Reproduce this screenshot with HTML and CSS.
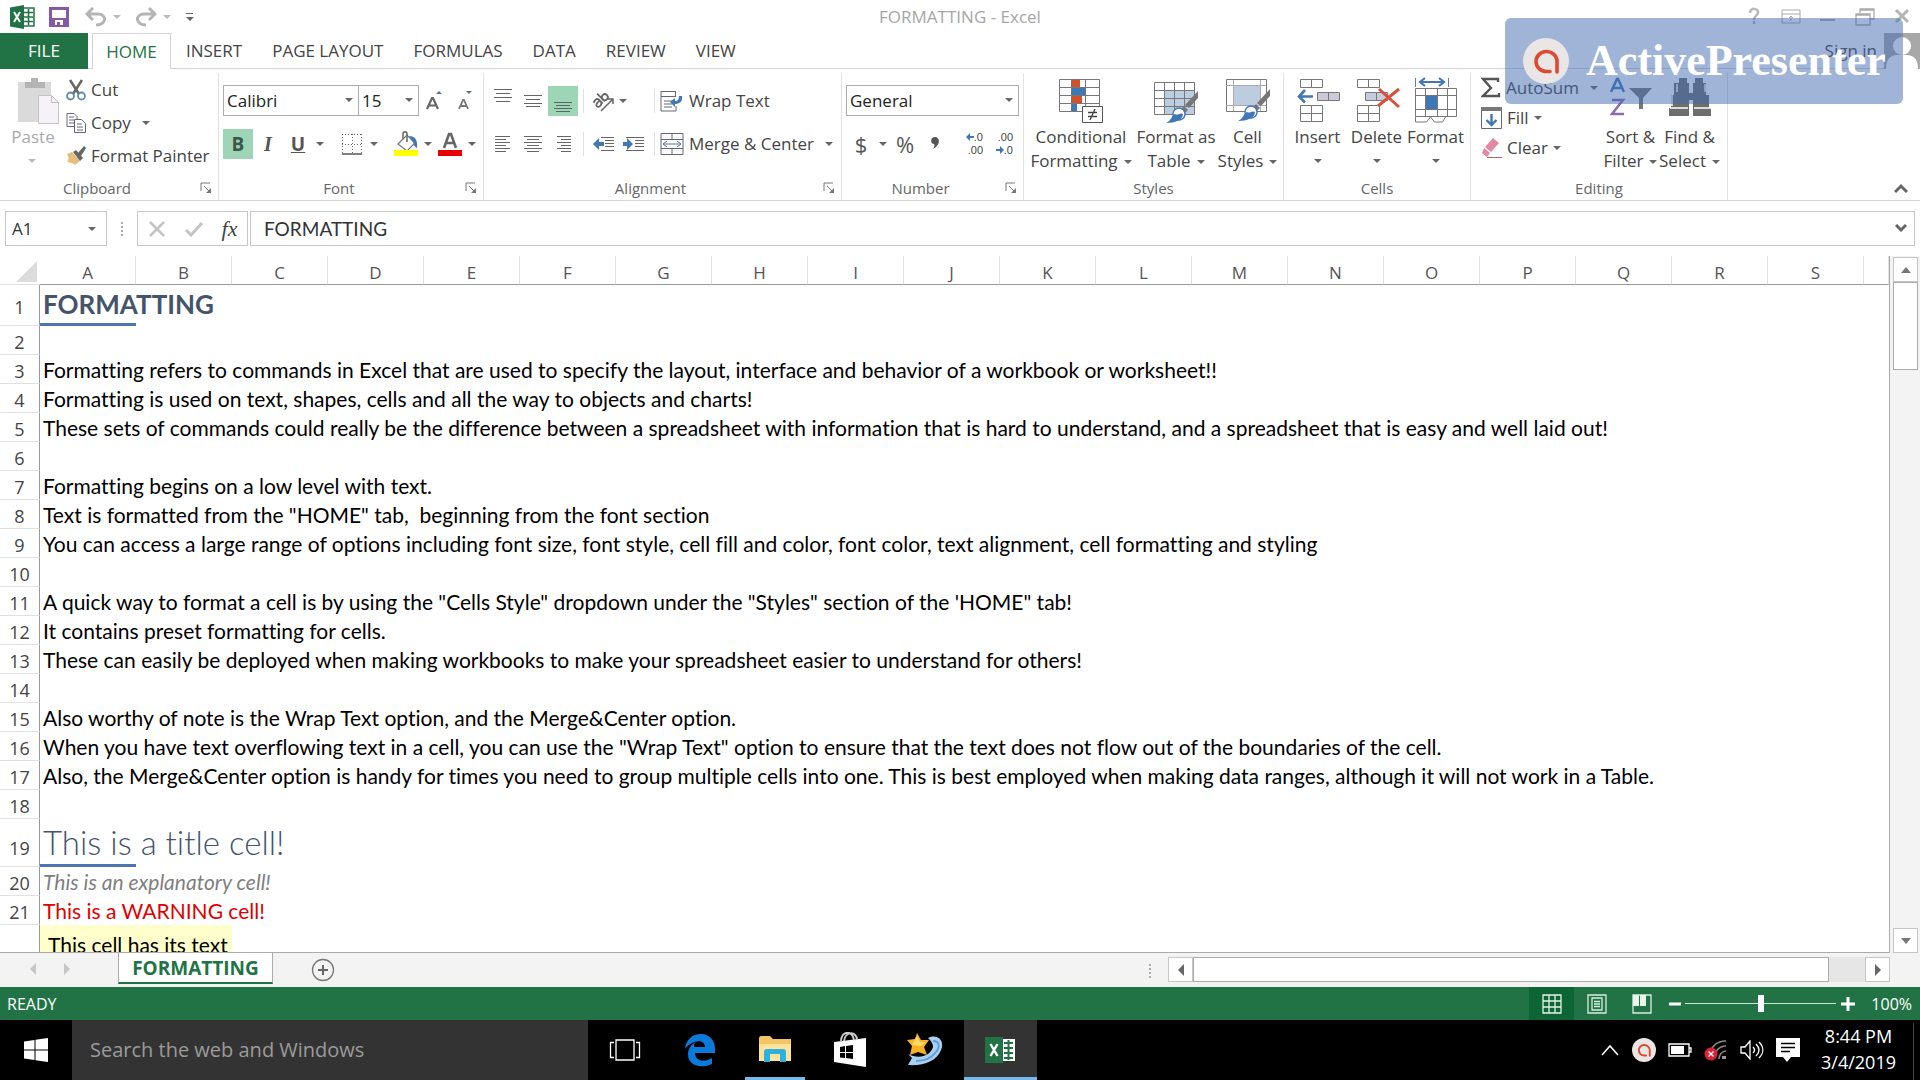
FILE: index.html
```html
<!DOCTYPE html>
<html lang="en">
<head>
<meta charset="utf-8">
<title>FORMATTING - Excel</title>
<link rel="stylesheet" href="styles.css">
</head>
<body>
<svg class="defs" aria-hidden="true">
  <symbol id="launcher" viewBox="0 0 12 12"><path d="M1 9V1h9" fill="none" stroke="#777"/><path d="M4 4l5 5" stroke="#777"/><path d="M11 6v5H6z" fill="#777"/></symbol>
  <symbol id="excel" viewBox="0 0 26 26"><path d="M14 4h11v18H14z" fill="#fff" stroke="#217346" stroke-width="1.5"/><path d="M15 8.5h9M15 13h9M15 17.5h9M19.5 5v16" stroke="#217346" stroke-width="1.6"/><path d="M1 3.5L15 1v24L1 22.500z" fill="#217346"/><path d="M5 8l6 10M11 8L5 18" stroke="#fff" stroke-width="2"/></symbol>
  <symbol id="brush" viewBox="0 0 34 34"><path d="M33 1v7l-9 10-4-3z" fill="#777"/><path d="M19 16l4 4-3 3-4-4z" fill="#777"/><circle cx="14" cy="24" r="6" fill="#fff" stroke="#3f78b5" stroke-width="1.4"/><path d="M1 33c5-2 6-8 9-9 3 2 5-2 8 0 0 6-8 9-17 9z" fill="#3f78b5"/></symbol>
  <symbol id="presenter" viewBox="0 0 46 46"><circle cx="23" cy="23" r="23" fill="#ebe6e6"/><path d="M34 34V23a10.500 10 0 1 0-10.500 10.500h3.500" fill="none" stroke="#dc4a36" stroke-width="3.600" stroke-linecap="round"/></symbol>
</svg>

<header class="titlebar">
  <div class="quick">
    <svg width="26" height="26"><use href="#excel"/></svg>
    <button class="flat save" aria-label="Save"><svg width="20" height="20" viewBox="0 0 20 20"><path d="M1.500 1.500h17v17h-17z" fill="#fff" stroke="#8659a6" stroke-width="3"/><path d="M2 11h16v8H2z" fill="#8659a6"/><path d="M6 13h8v5H6z" fill="#fff"/><path d="M8 15h3v4H8z" fill="#8659a6"/></svg></button>
    <button class="flat undo" aria-label="Undo"><svg width="22" height="20" viewBox="0 0 22 20"><path d="M2 7h11c9 0 9 11-2 11M8 1L2 7l6 6" fill="none" stroke="#b4b4b4" stroke-width="3"/></svg><i class="caret pale"></i></button>
    <button class="flat undo" aria-label="Redo"><svg width="22" height="20" viewBox="0 0 22 20"><path d="M20 7H9c-9 0-9 11 2 11M14 1l6 6-6 6" fill="none" stroke="#b4b4b4" stroke-width="3"/></svg><i class="caret pale"></i></button>
    <button class="flat custom" aria-label="Customize"><span></span><i class="caret"></i></button>
  </div>
  <h1 class="title">FORMATTING - Excel</h1>
  <div class="window">
    <button class="flat" aria-label="Help"><svg width="20" height="20" viewBox="0 0 20 20"><path d="M6 6c0-6 9-5 8 0-1 3-4 3-4 7M10 14v3" stroke="#b8b8b8" stroke-width="2.500" fill="none"/></svg></button>
    <button class="flat" aria-label="Ribbon options"><svg width="20" height="20" viewBox="0 0 20 20"><path d="M1 3h18v13H1zM1 7h18M10 14V9M8 11l2-2 2 2" stroke="#aaa" fill="none"/></svg></button>
    <button class="flat" aria-label="Minimize"><svg width="20" height="20" viewBox="0 0 20 20"><path d="M2 13h15" stroke="#aaa" stroke-width="2"/></svg></button>
    <button class="flat" aria-label="Restore"><svg width="20" height="20" viewBox="0 0 20 20"><path d="M5 6V2h14v10h-4M5 3h14M1 7h14v11H1zM1 8h14" stroke="#aaa" stroke-width="1.300" fill="none"/></svg></button>
    <button class="flat" aria-label="Close"><svg width="20" height="20" viewBox="0 0 20 20"><path d="M4 3l12 12M16 3L4 15" stroke="#b4b4b4" stroke-width="3"/></svg></button>
  </div>
</header>

<nav class="tabs">
  <button class="tab file">FILE</button>
  <button class="tab home">HOME</button>
  <button class="tab">INSERT</button>
  <button class="tab">PAGE LAYOUT</button>
  <button class="tab">FORMULAS</button>
  <button class="tab">DATA</button>
  <button class="tab">REVIEW</button>
  <button class="tab">VIEW</button>
  <a class="signin" href="#">Sign in</a>
  <svg class="avatar" width="36" height="36" viewBox="0 0 36 36"><path d="M0 0h36v36H0z" fill="#a8a8a8"/><circle cx="18" cy="13" r="9" fill="#fff"/><path d="M2 36c0-10 4-13 10-14h12c6 1 10 4 10 14z" fill="#fff"/></svg>
</nav>

<section class="ribbon" aria-label="Home ribbon">
  <div class="group clipboard">
    <div class="body">
      <button class="big paste"><svg width="42" height="48" viewBox="0 0 42 48"><path d="M0 5h33v40H0z" fill="#dadada"/><path d="M7 11V5h6V1h7v4h7v6z" fill="#b4b4b4"/><path d="M20.500 18.500h13l7 7v21h-20z" fill="#f6f3f8" stroke="#c3c3c3"/><path d="M33.500 18.500v7h7" fill="none" stroke="#c3c3c3"/></svg><span>Paste</span><i class="caret pale"></i></button>
      <div class="stack wide">
        <button class="item"><svg width="20" height="22" viewBox="0 0 20 22"><path d="M4 1l9 14M16 1L7 15" stroke="#666" stroke-width="2.500"/><circle cx="4.500" cy="17" r="3.500" fill="none" stroke="#6288ad" stroke-width="1.800"/><circle cx="15.500" cy="17" r="3.500" fill="none" stroke="#6288ad" stroke-width="1.800"/></svg>Cut</button>
        <button class="item"><svg width="20" height="22" viewBox="0 0 20 22"><path d="M1 1.500h7l3 3v10H1zM3 5h5M3 8h5M3 11h5" fill="#fff" stroke="#667"/><path d="M8.500 7.500h7l4 4v9h-11zM11 12h5M11 15h6M11 18h6" fill="#fff" stroke="#667"/></svg>Copy<i class="caret"></i></button>
        <button class="item"><svg width="20" height="22" viewBox="0 0 20 22"><path d="M1 9l5-2 8 9-5 4c-3-3-6-2-8-3 2-2 2-5 0-8z" fill="#e7bd7b"/><path d="M7 7l3-2 7 8-3 3zM12 8l6-7 2 2-5 8z" fill="#666"/></svg>Format Painter</button>
      </div>
    </div>
    <div class="caption"><span>Clipboard</span><button class="flat" aria-label="Clipboard settings"><svg width="12" height="12"><use href="#launcher"/></svg></button></div>
  </div>

  <div class="group font">
    <div class="body rows">
      <div class="row">
        <label class="combo face"><select aria-label="Font"><option>Calibri</option></select></label><label class="combo size"><select aria-label="Font size"><option>15</option></select></label>
        <button class="tool" aria-label="Grow font"><svg width="18" height="22" viewBox="0 0 18 22"><path d="M2 19L7 8h1l5 11M4 15.500h7" fill="none" stroke="#666" stroke-width="2.200"/><path d="M11 4l3-3 3 3z" fill="#5a6f90"/></svg></button>
        <button class="tool" aria-label="Shrink font"><svg width="18" height="22" viewBox="0 0 18 22"><path d="M4 19L8 10h1l4 9M6 16h5" fill="none" stroke="#777" stroke-width="1.800"/><path d="M11 1h6l-3 3z" fill="#5a6f90"/></svg></button>
      </div>
      <div class="row">
        <button class="tool on bold">B</button><button class="tool italic">I</button><button class="tool under">U</button><button class="drop" aria-label="Underline styles"><i class="caret"></i></button>
        <span class="rule"></span>
        <button class="tool" aria-label="Borders"><svg width="22" height="22" viewBox="0 0 22 22"><path d="M1 1.500h20M1 11.500h20M1.500 1v20M11.500 1v20M20.500 1v20" stroke="#666" stroke-dasharray="1 2" fill="none"/><path d="M1 21h20" stroke="#555" stroke-width="1.500"/></svg></button><button class="drop" aria-label="Border styles"><i class="caret"></i></button>
        <span class="rule"></span>
        <button class="tool" aria-label="Fill color"><svg width="26" height="26" viewBox="0 0 26 26"><path d="M5 13l9-9 8 8-8 8z" fill="#fff" stroke="#777" stroke-width="1.200"/><path d="M10 8V3c0-3 4-3 4 0v8" fill="none" stroke="#666" stroke-width="1.500"/><path d="M16 5c6 0 9 4 8 12-4-2-3-5-4-6z" fill="#3f78b5"/><path d="M1 19h24v6H1z" fill="#ff0"/></svg></button><button class="drop" aria-label="Fill colors"><i class="caret"></i></button>
        <button class="tool" aria-label="Font color"><svg width="26" height="26" viewBox="0 0 26 26"><path d="M7 17l5-14h2l5 14M9 12h8" fill="none" stroke="#666" stroke-width="2.600"/><path d="M1 19h24v6H1z" fill="#e80000"/></svg></button><button class="drop" aria-label="Font colors"><i class="caret"></i></button>
      </div>
    </div>
    <div class="caption"><span>Font</span><button class="flat" aria-label="Font settings"><svg width="12" height="12"><use href="#launcher"/></svg></button></div>
  </div>

  <div class="group align">
    <div class="body rows">
      <div class="row">
        <button class="tool" aria-label="Top align"><svg width="20" height="30"><path d="M1 3.500h18M3 7.500h14M1 11.500h18M3 15.500h14" stroke="#666"/></svg></button><button class="tool" aria-label="Middle align"><svg width="20" height="30"><path d="M1 9.500h18M3 13.500h14M1 17.500h18M3 20.500h14" stroke="#666"/></svg></button><button class="tool on" aria-label="Bottom align"><svg width="20" height="30"><path d="M1 16.500h18M3 19.500h14M1 22.500h18M3 25.500h14" stroke="#566b60"/></svg></button>
        <span class="rule"></span>
        <button class="tool" aria-label="Orientation"><svg width="24" height="24" viewBox="0 0 24 24"><g transform="rotate(-45 10 11)" fill="none" stroke="#666" stroke-width="1.800"><path d="M2 7c5-2 6 0 6 2v5M8 10c-4-1-6 0-6 2s4 3 6 0M11 3v11"/><circle cx="14" cy="11" r="3"/></g><path d="M9 22L21 10M16 10h5v5" fill="none" stroke="#666" stroke-width="1.500"/></svg></button><button class="tool start" aria-label="Orientation options"><i class="caret"></i></button>
        <span class="rule"></span>
        <button class="item"><svg width="24" height="24" viewBox="0 0 24 24"><path d="M1 2.500h14M1 7.500h14M1 2v20h15v-5M4 12h8M4 15h8M4 18h8M15.500 2v6" fill="none" stroke="#667"/><path d="M22 7c1 6-3 8-7 8v3l-5-5 5-4v3c3 0 4-2 4-5z" fill="#3f78b5"/></svg>Wrap Text</button>
      </div>
      <div class="row">
        <button class="tool" aria-label="Align left"><svg width="20" height="18"><path d="M2 1.500h15M2 4.500h11M2 7.500h15M2 10.500h11M2 13.500h15M2 16.500h11" stroke="#666"/></svg></button><button class="tool" aria-label="Center"><svg width="20" height="18"><path d="M1 1.500h18M4 4.500h12M1 7.500h18M4 10.500h12M1 13.500h18M4 16.500h12" stroke="#666"/></svg></button><button class="tool" aria-label="Align right"><svg width="20" height="18"><path d="M4 1.500h14M8 4.500h10M4 7.500h14M8 10.500h10M4 13.500h14M8 16.500h10" stroke="#666"/></svg></button>
        <span class="rule"></span>
        <button class="tool" aria-label="Decrease indent"><svg width="22" height="16"><path d="M8 1.500h13M12 4.500h9M12 7.500h9M12 10.500h9M8 14.500h13" stroke="#666"/><path d="M0 8l6-6v4h5v4H6v4z" fill="#3f78b5"/></svg></button><button class="tool" aria-label="Increase indent"><svg width="22" height="16"><path d="M3 1.500h18M12 4.500h9M12 7.500h9M12 10.500h9M3 14.500h18" stroke="#666"/><path d="M10 8L4 2v4H0v4h4v4z" fill="#3f78b5"/></svg></button>
        <span class="rule"></span>
        <button class="item"><svg width="24" height="24" viewBox="0 0 24 24"><path d="M1 1.500h22v21H1zM1 7.500h22M1 16.500h22M12 2v5M12 17v5" fill="none" stroke="#667"/><path d="M3 12h18" stroke="#5877a0"/><path d="M7 9l-4 3 4 3M17 9l4 3-4 3" fill="none" stroke="#5877a0"/></svg>Merge &amp; Center<i class="caret"></i></button>
      </div>
    </div>
    <div class="caption"><span>Alignment</span><button class="flat" aria-label="Alignment settings"><svg width="12" height="12"><use href="#launcher"/></svg></button></div>
  </div>

  <div class="group number">
    <div class="body rows">
      <div class="row"><label class="combo format"><select aria-label="Number format"><option>General</option></select></label></div>
      <div class="row">
        <button class="tool sign">$</button><button class="drop" aria-label="Currencies"><i class="caret"></i></button><button class="tool sign">%</button><button class="tool comma" aria-label="Comma style"><svg width="10" height="16" viewBox="0 0 10 16"><path d="M5 1c5 0 6 8-2 12 1-2 2-3 1-5C0 8 0 1 5 1z" fill="#555"/></svg></button>
        <span class="rule"></span>
        <button class="tool dec" aria-label="Increase decimal"><span><svg width="8" height="8"><path d="M0 4l4-4v3h4v2H4v3z" fill="#3f78b5"/></svg>.0</span><span>.00</span></button><button class="tool dec" aria-label="Decrease decimal"><span>.00</span><span><svg width="8" height="8"><path d="M8 4L4 0v3H0v2h4v3z" fill="#3f78b5"/></svg>.0</span></button>
      </div>
    </div>
    <div class="caption"><span>Number</span><button class="flat" aria-label="Number settings"><svg width="12" height="12"><use href="#launcher"/></svg></button></div>
  </div>

  <div class="group styles">
    <div class="body">
      <button class="big w-l"><svg width="46" height="48" viewBox="0 0 46 48"><path d="M1.500 2.500h40v32h-40zM1 10.500h40M1 18.500h40M1 26.500h40M13.500 3v31M27.500 3v31" fill="#fff" stroke="#777"/><path d="M14 3h8v7h-8zM14 19h10v7H14z" fill="#d2512d"/><path d="M14 11h13v7H14zM14 27h5v7h-5z" fill="#3f78b5"/><path d="M24.500 29.500h20v16h-20z" fill="#fff" stroke="#555"/><path d="M30 35.500h9M30 39.500h9M37 32l-5 11" stroke="#444" stroke-width="1.300"/></svg><span>Conditional<br>Formatting<i class="caret"></i></span></button>
      <button class="big w-m"><svg width="46" height="48" viewBox="0 0 46 48"><path d="M1.500 5.500h40v32h-40z" fill="#fff"/><path d="M12 13h29v24H12z" fill="#bccde2"/><path d="M1.500 5.500h40v32h-40zM1 13.500h40M1 21.500h40M1 29.500h40M11.500 6v31M21.500 6v31M31.500 6v31" fill="none" stroke="#777"/><use href="#brush" x="12" y="13" width="34" height="34"/></svg><span>Format as<br>Table<i class="caret"></i></span></button>
      <button class="big w-s"><svg width="46" height="48" viewBox="0 0 46 48"><path d="M1.500 2.500h40v32h-40z" fill="#fff" stroke="#777"/><path d="M9 9h26v19H9z" fill="#bccde2"/><path d="M1 8.500h40M1 28.500h40M8.500 3v31M35.500 3v31" stroke="#aaa"/><use href="#brush" x="12" y="11" width="34" height="34"/></svg><span>Cell<br>Styles<i class="caret"></i></span></button>
    </div>
    <div class="caption"><span>Styles</span></div>
  </div>

  <div class="group cells">
    <div class="body">
      <button class="big w-s"><svg width="46" height="48" viewBox="0 0 46 48"><path d="M5.500 2.500h22v8h-22zM16.500 3v7M5.500 28.500h22v16h-22zM5 36.500h22M16.500 29v15" fill="none" stroke="#777"/><path d="M22.500 15.500h22v8h-22zM33.500 16v7" fill="#ccc9d8" stroke="#777"/><path d="M18 19.500H5M10 13l-6 6.500 6 6" fill="none" stroke="#3f78b5" stroke-width="2.600"/></svg><span>Insert</span><i class="caret"></i></button>
      <button class="big w-s"><svg width="46" height="48" viewBox="0 0 46 48"><path d="M3.500 2.500h22v8h-22zM14.500 3v7M3.500 28.500h22v16h-22zM3 36.500h22M14.500 29v15" fill="none" stroke="#777"/><path d="M11.500 15.500h22v8h-22zM22.500 16v7" fill="#c6ccdf" stroke="#777"/><path d="M25 12l20 18M45 12L24 29" fill="none" stroke="#d9503a" stroke-width="3"/></svg><span>Delete</span><i class="caret"></i></button>
      <button class="big w-s"><svg width="46" height="48" viewBox="0 0 46 48"><path d="M2.500 11.500h41v28h-41zM2 18.500h41M2 32.500h41M12.500 12v27M24.500 12v27M34.500 12v27M2.500 40v5h11l4-5 4 5h8l3-5" fill="none" stroke="#777"/><path d="M13 19h11v13H13z" fill="#3f78b5"/><path d="M2.500 1v9M35.500 1v9" stroke="#6b7f96"/><path d="M7 5h24M12 1L7 5l5 4M26 1l5 4-5 4" fill="none" stroke="#3f78b5" stroke-width="2.200"/></svg><span>Format</span><i class="caret"></i></button>
    </div>
    <div class="caption"><span>Cells</span></div>
  </div>

  <div class="group editing">
    <div class="body">
      <div class="stack sum">
        <button class="item"><svg width="20" height="22" viewBox="0 0 20 22"><path d="M17 5V2H2l8 9-8 8h16v-3" fill="none" stroke="#555" stroke-width="2.400"/></svg>AutoSum<i class="caret far"></i></button>
        <button class="item"><svg width="21" height="22" viewBox="0 0 21 22"><path d="M.5.500h20v21H.5z" fill="#fff" stroke="#667"/><path d="M0 0h21v4H0z" fill="#777"/><path d="M10.500 7v11M5.500 13l5 5 5-5" fill="none" stroke="#3f78b5" stroke-width="2.400"/></svg>Fill<i class="caret near"></i></button>
        <button class="item"><svg width="21" height="22" viewBox="0 0 21 22"><path d="M12 1l6 5-8 9-6-5z" fill="#e487a0"/><path d="M3 11l6 5-3 4-5-4z" fill="#e487a0"/><path d="M6 20.500h15" stroke="#a66"/></svg>Clear<i class="caret near"></i></button>
      </div>
      <button class="big w-s"><svg width="46" height="48" viewBox="0 0 46 48"><path d="M3 15L9 2h1l6 13M5 11h9" fill="none" stroke="#3f78b5" stroke-width="2.500"/><path d="M4 23h11L4 37h12" fill="none" stroke="#8d6aa8" stroke-width="2.500"/><path d="M21 11h23l-9 10v11h-4V21z" fill="#777"/></svg><span>Sort &amp;<br>Filter<i class="caret"></i></span></button>
      <button class="big w-s"><svg width="46" height="48" viewBox="0 0 46 48"><path d="M12 1h8v5h2v10h4V6h2V1h8v5h3v12h3v13h2v8H26V23h-4v16H2v-8h2V18h3V6h5z" fill="#6d6d6d"/><path d="M5 18v11M43 18v11M3 31h18M27 31h17M10 7v8M38 7v8" stroke="#fff" stroke-width="1.500"/></svg><span>Find &amp;<br>Select<i class="caret"></i></span></button>
    </div>
    <div class="caption"><span>Editing</span></div>
  </div>
  <button class="flat collapse" aria-label="Collapse ribbon"><svg width="14" height="12" viewBox="0 0 14 12"><path d="M1 10l6-6 6 6" fill="none" stroke="#666" stroke-width="3"/></svg></button>
</section>

<section class="formulabar">
  <div class="namebox"><input aria-label="Name box" value="A1"><button class="drop" aria-label="Names"><i class="caret"></i></button></div>
  <span class="grip"></span>
  <div class="fx">
    <button class="flat" aria-label="Cancel"><svg width="18" height="16" viewBox="0 0 18 16"><path d="M2 1l14 14M16 1L2 15" stroke="#c4c4c4" stroke-width="2.500"/></svg></button>
    <button class="flat" aria-label="Enter"><svg width="18" height="16" viewBox="0 0 18 16"><path d="M1 9l5 5L17 2" fill="none" stroke="#c4c4c4" stroke-width="3"/></svg></button>
    <button class="flat fn">fx</button>
  </div>
  <div class="formula"><input aria-label="Formula" value="FORMATTING"><button class="flat" aria-label="Expand"><svg width="12" height="9" viewBox="0 0 12 9"><path d="M1 1l5 5 5-5" fill="none" stroke="#666" stroke-width="3"/></svg></button></div>
</section>

<main class="workarea">
  <div class="grid">
    <table>
      <colgroup><col class="c-num"><col class="c"><col class="c"><col class="c"><col class="c"><col class="c"><col class="c"><col class="c"><col class="c"><col class="c"><col class="c"><col class="c"><col class="c"><col class="c"><col class="c"><col class="c"><col class="c"><col class="c"><col class="c"><col class="c"><col></colgroup>
      <thead><tr><td class="corner"><svg width="21" height="21"><path d="M21 0v21H0z" fill="#dcdcdc"/></svg></td><th>A</th><th>B</th><th>C</th><th>D</th><th>E</th><th>F</th><th>G</th><th>H</th><th>I</th><th>J</th><th>K</th><th>L</th><th>M</th><th>N</th><th>O</th><th>P</th><th>Q</th><th>R</th><th>S</th><th></th></tr></thead>
      <tbody>
        <tr class="r-head"><th>1</th><td class="h1">FORMATTING</td></tr>
        <tr><th>2</th><td></td></tr>
        <tr><th>3</th><td>Formatting refers to commands in Excel that are used to specify the layout, interface and behavior of a workbook or worksheet!!</td></tr>
        <tr><th>4</th><td>Formatting is used on text, shapes, cells and all the way to objects and charts!</td></tr>
        <tr><th>5</th><td>These sets of commands could really be the difference between a spreadsheet with information that is hard to understand, and a spreadsheet that is easy and well laid out!</td></tr>
        <tr><th>6</th><td></td></tr>
        <tr><th>7</th><td>Formatting begins on a low level with text.</td></tr>
        <tr><th>8</th><td>Text is formatted from the "HOME" tab,&nbsp; beginning from the font section</td></tr>
        <tr><th>9</th><td>You can access a large range of options including font size, font style, cell fill and color, font color, text alignment, cell formatting and styling</td></tr>
        <tr><th>10</th><td></td></tr>
        <tr><th>11</th><td>A quick way to format a cell is by using the "Cells Style" dropdown under the "Styles" section of the 'HOME" tab!</td></tr>
        <tr><th>12</th><td>It contains preset formatting for cells.</td></tr>
        <tr><th>13</th><td>These can easily be deployed when making workbooks to make your spreadsheet easier to understand for others!</td></tr>
        <tr><th>14</th><td></td></tr>
        <tr><th>15</th><td>Also worthy of note is the Wrap Text option, and the Merge&amp;Center option.</td></tr>
        <tr><th>16</th><td>When you have text overflowing text in a cell, you can use the "Wrap Text" option to ensure that the text does not flow out of the boundaries of the cell.</td></tr>
        <tr><th>17</th><td>Also, the Merge&amp;Center option is handy for times you need to group multiple cells into one. This is best employed when making data ranges, although it will not work in a Table.</td></tr>
        <tr><th>18</th><td></td></tr>
        <tr class="r-title"><th>19</th><td class="big-title">This is a title cell!</td></tr>
        <tr><th>20</th><td class="note">This is an explanatory cell!</td></tr>
        <tr><th>21</th><td class="warn">This is a WARNING cell!</td></tr>
        <tr class="r-wrap"><th></th><td class="wrapped" colspan="2">This cell has its text</td></tr>
      </tbody>
    </table>
  </div>
  <div class="vscroll">
    <button class="arrow" aria-label="Scroll up"><svg width="10" height="6"><path d="M0 6l5-6 5 6z" fill="#777"/></svg></button>
    <div class="thumb"></div>
    <button class="arrow" aria-label="Scroll down"><svg width="10" height="6"><path d="M0 0h10L5 6z" fill="#777"/></svg></button>
  </div>
</main>

<section class="sheetbar">
  <button class="flat nav" aria-label="Previous sheet"><svg width="6" height="12"><path d="M6 0v12L0 6z" fill="#c6c6c6"/></svg></button>
  <button class="flat nav" aria-label="Next sheet"><svg width="6" height="12"><path d="M0 0v12l6-6z" fill="#c6c6c6"/></svg></button>
  <button class="sheet">FORMATTING</button>
  <button class="flat add" aria-label="New sheet"><svg width="24" height="24"><circle cx="12" cy="12" r="10.500" fill="none" stroke="#777" stroke-width="1.300"/><path d="M7 12h10M12 7v10" stroke="#666" stroke-width="2"/></svg></button>
  <span class="grip"></span>
  <div class="hscroll">
    <button class="arrow" aria-label="Scroll left"><svg width="6" height="12"><path d="M6 0v12L0 6z" fill="#666"/></svg></button>
    <div class="thumb"></div>
    <button class="arrow" aria-label="Scroll right"><svg width="6" height="12"><path d="M0 0v12l6-6z" fill="#666"/></svg></button>
  </div>
</section>

<footer class="status">
  <span class="ready">READY</span>
  <button class="view on" aria-label="Normal view"><svg width="20" height="20"><path d="M1 1h18v18H1zM1 7h18M1 13h18M7 1v18M13 1v18" fill="none" stroke="#e4f3e9" stroke-width="1.300"/></svg></button>
  <button class="view" aria-label="Page layout view"><svg width="20" height="20"><path d="M1 1h18v18H1zM5 4h10v12H5zM7 7.500h6M7 10h6M7 12.500h6" fill="none" stroke="#d8eede" stroke-width="1.300"/></svg></button>
  <button class="view" aria-label="Page break view"><svg width="20" height="20"><path d="M1 1h18v18H1z" fill="none" stroke="#d8eede" stroke-width="1.300"/><path d="M1 1h6v11H1zM8 1h6v11H8z" fill="#e8f6ec"/></svg></button>
  <button class="zoom out" aria-label="Zoom out"><svg width="12" height="12"><path d="M0 6h12" stroke="#fff" stroke-width="3"/></svg></button>
  <input class="slider" type="range" min="0" max="100" value="50" aria-label="Zoom">
  <button class="zoom" aria-label="Zoom in"><svg width="14" height="14"><path d="M0 7h14M7 0v14" stroke="#fff" stroke-width="3"/></svg></button>
  <span class="percent">100%</span>
</footer>

<section class="taskbar" aria-label="Taskbar">
  <button class="start" aria-label="Start"><svg width="24" height="24"><path d="M0 3.500L10.500 2v9.500H0zM11.500 1.800L24 0v11.500H11.500zM0 12.500h10.500V22L0 20.500zM11.500 12.500H24V24l-12.500-1.800z" fill="#fff"/></svg></button>
  <input class="search" aria-label="Search" placeholder="Search the web and Windows">
  <button class="app" aria-label="Task view"><svg width="32" height="22"><path d="M7 1h18v20H7zM5 3.500H1.500v15H5M27 3.500h3.500v15H27" fill="none" stroke="#fff" stroke-width="1.300"/></svg></button>
  <button class="app" aria-label="Edge"><svg width="32" height="34" viewBox="0 0 32 34"><path d="M1 16C2 7 8 1 17 1c9 0 14 7 14 15v4H11c0 9 11 9 17 5v6C17 36 4 33 4 21c0-6 4-10 8-12-2 2-2 3-2 5h11c0-9-14-7-20 2z" fill="#0a7bdc"/></svg></button>
  <button class="app open" aria-label="File Explorer"><svg width="32" height="28"><path d="M0 2c0-1 1-2 2-2h9l3 3h18v22H0z" fill="#f3c564"/><path d="M0 8h32v17H0z" fill="#ffe39a"/><path d="M5 26V16c0-2 1-3 3-3h16c2 0 3 1 3 3v10h-6v-8H11v8z" fill="#2db0dc"/></svg></button>
  <button class="app" aria-label="Store"><svg width="34" height="36"><path d="M1 10l32-4v29L1 30z" fill="#fff"/><path d="M8 10c0-12 12-12 13-2M11 9c1-10 13-10 13-1" fill="none" stroke="#ccc" stroke-width="2"/><path d="M7 15l5-1v6H7zM13 14l7-1v7h-7zM7 21h5v5l-5-.5zM13 21h7v6l-7-1z" fill="#000"/></svg></button>
  <button class="app" aria-label="Movie Maker"><svg width="38" height="36"><path d="M22 6c10-5 17 3 13 12C31 29 18 34 2 33l4-7-4-4c10 5 22 3 25-7 0-4-2-6-5-9z" fill="#a8d0f2"/><path d="M27 9c7 0 7 6 3 11-5 7-13 9-20 9" fill="none" stroke="#5f9fda" stroke-width="2"/><path d="M11 1l4 7 8 0-5 7 3 8-9-3-8 3 2-9-5-6 8-1z" fill="#f8b325"/><path d="M11 4l3 6 6 0-5 4-9-1z" fill="#ffd867"/></svg></button>
  <button class="app current" aria-label="Excel"><svg width="32" height="30" viewBox="0 0 32 30"><path d="M17 4h13v22H17z" fill="#fff"/><path d="M19 8h9M19 13h9M19 18h9M19 23h9M23.500 5v20" stroke="#217346" stroke-width="2"/><path d="M0 2h18v26H0z" fill="#217346"/><path d="M5.500 9l7 12M12.500 9l-7 12" stroke="#fff" stroke-width="2.400"/></svg></button>
  <div class="tray">
    <button class="flat" aria-label="Hidden icons"><svg width="20" height="12"><path d="M2 11l8-9 8 9" fill="none" stroke="#fff" stroke-width="1.500"/></svg></button>
    <button class="flat" aria-label="ActivePresenter"><svg width="24" height="24"><use href="#presenter"/></svg></button>
    <button class="flat" aria-label="Battery"><svg width="24" height="14"><path d="M1 1h20v12H1zM21 5h2v4h-2" fill="none" stroke="#fff" stroke-width="1.300"/><path d="M3 3h13v8H3z" fill="#fff"/></svg></button>
    <button class="flat" aria-label="Network"><svg width="24" height="22"><path d="M5 20C5 9 12 2 22 2M10 20c0-7 5-13 12-13M15 20c0-4 3-8 7-8" fill="none" stroke="#888" stroke-width="1.500"/><path d="M18 17h4v3h-4z" fill="#999"/><circle cx="7" cy="15" r="6.500" fill="#d9213a"/><path d="M4.500 12.500l5 5M9.500 12.500l-5 5" stroke="#fff" stroke-width="1.300"/></svg></button>
    <button class="flat" aria-label="Volume"><svg width="24" height="20"><path d="M1 7h4l5-6v18l-5-6H1zM13 7c2 2 2 4 0 6M16 4c4 4 4 8 0 12M19 2c5 5 5 11 0 16" fill="none" stroke="#fff" stroke-width="1.300"/></svg></button>
    <button class="flat" aria-label="Notifications"><svg width="24" height="24"><path d="M0 0h24v19h-9l-4 5-4-5H0z" fill="#fff"/><path d="M5 5.500h14M5 9.500h14M5 13.500h9" stroke="#000" stroke-width="1.500"/></svg></button>
  </div>
  <div class="clock"><span>8:44 PM</span><span>3/4/2019</span></div>
</section>

<aside class="watermark"><svg width="46" height="46"><use href="#presenter"/></svg><span>ActivePresenter</span></aside>
</body>
</html>
```
FILE: styles.css
```css
* { box-sizing: border-box; }
html, body { height: 100%; }
body {
  margin: 0;
  display: flex;
  flex-direction: column;
  overflow: hidden;
  background: #fff;
  color: #444;
  font: 17px/24px "Open Sans", "Noto Sans", sans-serif;
}
button, input, select { font: inherit; color: inherit; background: none; border: 0; padding: 0; margin: 0; border-radius: 0; outline: 0; }
button { display: flex; align-items: center; justify-content: center; flex: none; white-space: nowrap; }
svg { display: block; flex: none; }
.defs { position: absolute; width: 0; height: 0; }
.caret { display: inline-block; border: 4px solid transparent; border-top-color: #666; border-bottom: 0; flex: none; }
.caret.pale { border-top-color: #bbb; }

.titlebar { flex: none; height: 33px; display: grid; grid-template-columns: 1fr auto 1fr; align-items: center; }
.quick { display: flex; align-items: center; padding-left: 9px; }
.save { margin: 0 16px 0 14px; }
.undo { gap: 6px; width: 50px; justify-content: flex-start; }
.custom { flex-direction: column; gap: 3px; width: 9px; margin-left: 0; }
.custom span { width: 7px; height: 1px; background: #666; }
.title { margin: 0; font-size: 17px; font-weight: 400; color: #a6a6a6; }
.window { display: flex; justify-content: flex-end; gap: 17px; padding-right: 8px; }

.tabs { flex: none; height: 36px; display: flex; border-bottom: 1px solid #d4d4d4; }
.tab { padding: 0 15px; height: 36px; }
.file { width: 88px; margin-right: 4px; background: #217346; color: #fff; }
.home { width: 79px; background: #fff; border: 1px solid #d4d4d4; border-bottom: 0; color: #217346; }
.signin { margin-left: auto; align-self: center; color: #444; text-decoration: none; padding-right: 7px; }

.ribbon { flex: none; height: 132px; display: flex; border-bottom: 1px solid #d4d4d4; }
.group { display: flex; flex-direction: column; flex: none; margin: 4px 0 0; border-right: 1px solid #e1e1e1; }
.clipboard { width: 219px; }
.font { width: 265px; }
.align { width: 358px; }
.number { width: 182px; }
.styles { width: 260px; }
.cells { width: 187px; }
.editing { width: 257px; }
.body { flex: 1; display: flex; padding: 0 4px; }
.caption { height: 24px; display: flex; align-items: center; font-size: 15px; color: #666; padding: 0 6px; }
.caption span { flex: 1; text-align: center; }
.caption span:not(:last-child) { padding-right: 12px; }
.big { flex-direction: column; justify-content: flex-start; padding-top: 4px; line-height: 24px; }
.big > .caret { margin-top: 10px; }
.big span .caret { margin: 0 0 3px 6px; }
.paste { width: 62px; color: #aaa; }
.paste span { padding-right: 4px; }
.paste svg { margin-left: 8px; }
.paste > .caret { margin-right: 6px; }
.w-l { width: 106px; }
.w-m { width: 84px; }
.w-s { width: 59px; }
.stack { display: flex; flex-direction: column; }
.item { gap: 5px; justify-content: flex-start; }
.item .caret { margin-left: 6px; }
.item .near { margin-left: 0; }
.wide .item { height: 33px; }
.sum { width: 126px; padding-left: 6px; flex: none; }
.sum .item { height: 30px; }
.rows { flex-direction: column; padding-top: 12px; gap: 12px; }
.row { display: flex; align-items: center; height: 31px; }
.tool { width: 30px; height: 30px; }
.tool.on { background: #9fd5b7; }
.drop { width: 14px; height: 30px; }
.rule { width: 1px; height: 24px; margin: 0 5px; background: #e1e1e1; }
.start { justify-content: flex-start; }
.bold { font-weight: 700; font-size: 19px; color: #3b5747; }
.italic { font: italic 700 20px/24px "Liberation Serif", serif; color: #555; }
.under { font-weight: 700; font-size: 19px; text-decoration: underline; color: #555; }
.combo { position: relative; height: 31px; border: 1px solid #ababab; display: flex; }
.combo select { appearance: none; width: 100%; padding-left: 3px; color: #222; }
.combo::after { content: ""; position: absolute; right: 5px; top: 12px; border: 4px solid transparent; border-top-color: #666; border-bottom: 0; pointer-events: none; }
.face { width: 136px; }
.size { width: 60px; border-left: 0; }
.format { width: 174px; }
.sign { font-size: 22px; color: #555; }
.dec { flex-direction: column; font: 11px/13px "Liberation Sans", sans-serif; align-items: flex-end; padding-right: 7px; }
.dec span { display: flex; align-items: center; }
.collapse { margin: auto 12px 6px auto; }

.formulabar { flex: none; height: 55px; display: flex; align-items: flex-start; padding: 10px 5px 0; color: #333; }
.namebox, .fx, .formula { display: flex; align-items: center; height: 35px; border: 1px solid #c6c6c6; }
.namebox { width: 102px; }
.namebox input { flex: 1; min-width: 0; padding-left: 6px; }
.namebox .drop { width: 28px; }
.grip { width: 1px; height: 14px; border-left: 2px dotted #aaa; }
.formulabar .grip { margin: 11px 14px 0; }
.fx { width: 111px; justify-content: space-around; }
.fn { font: italic 22px/24px "Liberation Serif", serif; color: #444; }
.formula { flex: 1; margin-left: 2px; padding-right: 7px; }
.formula input { flex: 1; padding-left: 13px; font: 19px/24px Lato, sans-serif; color: #333; }

.workarea { flex: 1; min-height: 0; display: flex; }
.grid { flex: 1; min-width: 0; overflow: hidden; border-right: 1px solid #ababab; border-bottom: 1px solid #ababab; }
.grid table { width: 100%; table-layout: fixed; border-collapse: separate; border-spacing: 0; }
.c-num { width: 40px; }
.c { width: 96px; }
.grid td, .grid th { padding: 0; }
thead tr { height: 29px; }
.grid thead th { font-weight: 400; line-height: 22px; color: #555; border-right: 1px solid #e1e1e1; border-bottom: 1px solid #999; padding-top: 5px; }
.corner { border-bottom: 1px solid #e1e1e1; }
.corner svg { margin: 3px 0 0 16px; }
tbody tr { height: 29px; }
.grid tbody th { font-weight: 400; font-size: 18px; line-height: 20px; color: #444; border-right: 1px solid #999; border-bottom: 1px solid #e1e1e1; vertical-align: bottom; padding-bottom: 2px; }
tbody td { font: 21px/28px Lato, sans-serif; font-variant-ligatures: none; color: #000; white-space: nowrap; overflow: visible; }
.grid tbody td { padding-left: 3px; }
.r-head { height: 41px; }
.grid .r-head th, .grid .r-title th { padding-bottom: 8px; }
.grid .h1 { font-size: 26px; font-weight: 700; color: #44546a; border-bottom: 3px solid #4f74b3; }
.r-title { height: 48px; }
.grid .big-title { font-size: 33px; line-height: 44px; font-weight: 300; color: #44546a; border-bottom: 3px solid #4f74b3; }
.grid .note { font-style: italic; color: #7f7f7f; }
.grid .warn { color: #e00000; }
.grid .wrapped { background: #ffffcc; padding: 6px 0 0 8px; }

.arrow { border: 1px solid #c6c6c6; background: #fff; }
.vscroll { width: 30px; padding: 1px 2px 0 3px; display: flex; flex-direction: column; background: #f3f3f3; }
.vscroll .arrow { height: 25px; }
.vscroll .thumb { height: 88px; background: #fff; border: 1px solid #ababab; margin-bottom: auto; }

.sheetbar { flex: none; height: 34px; display: flex; align-items: flex-start; background: #f3f3f3; padding: 0 30px 0 16px; }
.nav { width: 34px; height: 32px; }
.sheet { width: 155px; height: 31px; margin-left: 34px; background: #fff; border: 1px solid #ababab; border-top: 0; border-bottom: 2px solid #217346; color: #217346; font-weight: 700; font-size: 19px; }
.add { margin: 5px auto 0 38px; }
.sheetbar .grip { margin-top: 11px; }
.hscroll { width: 722px; margin: 4px 0 0 17px; display: flex; background: #e6e6e6; }
.hscroll .arrow { width: 25px; height: 25px; }
.hscroll .thumb { width: 636px; height: 25px; background: #fff; border: 1px solid #ababab; margin-right: auto; }

.status { flex: none; height: 33px; display: flex; align-items: center; background: #217346; color: #fff; font-size: 16px; padding: 0 8px 0 7px; }
.ready { margin-right: auto; }
.view { width: 45px; height: 33px; }
.view.on { background: #0d6434; }
.zoom { width: 24px; height: 33px; }
.zoom.out { width: 21px; }
.slider { appearance: none; width: 151px; height: 24px; background: linear-gradient(#cfe6d7, #cfe6d7) center / 100% 1px no-repeat; }
.slider::-webkit-slider-thumb { appearance: none; width: 6px; height: 17px; background: #fff; }
.percent { width: 52px; text-align: right; }

.taskbar { flex: none; height: 60px; display: flex; background: #000; color: #fff; }
.taskbar .start { width: 72px; justify-content: center; }
.search { width: 516px; background: #333; padding-left: 18px; font-size: 20px; }
.search::placeholder { color: #9b9b9b; opacity: 1; }
.app { width: 60px; margin-left: 15px; border-bottom: 3px solid transparent; border-top: 3px solid transparent; }
.search + .app { margin-left: 7px; }
.open { border-bottom-color: #76b9ed; }
.current { width: 73px; margin-left: 9px; background: #333; border-bottom-color: #76b9ed; border-top-color: #333; }
.tray { margin-left: auto; display: flex; align-items: center; gap: 12px; }
.clock { width: 110px; margin: 3px 6px 0 4px; display: flex; flex-direction: column; align-items: center; font-size: 18px; line-height: 26px; border-right: 1px solid #444; }

.watermark { position: absolute; top: 18px; right: 17px; width: 398px; height: 86px; display: flex; align-items: center; gap: 17px; padding-left: 18px; border-radius: 6px; background: rgba(65, 105, 175, 0.5); color: #fff; font: 700 44px/86px "Liberation Serif", serif; white-space: nowrap; }
```
